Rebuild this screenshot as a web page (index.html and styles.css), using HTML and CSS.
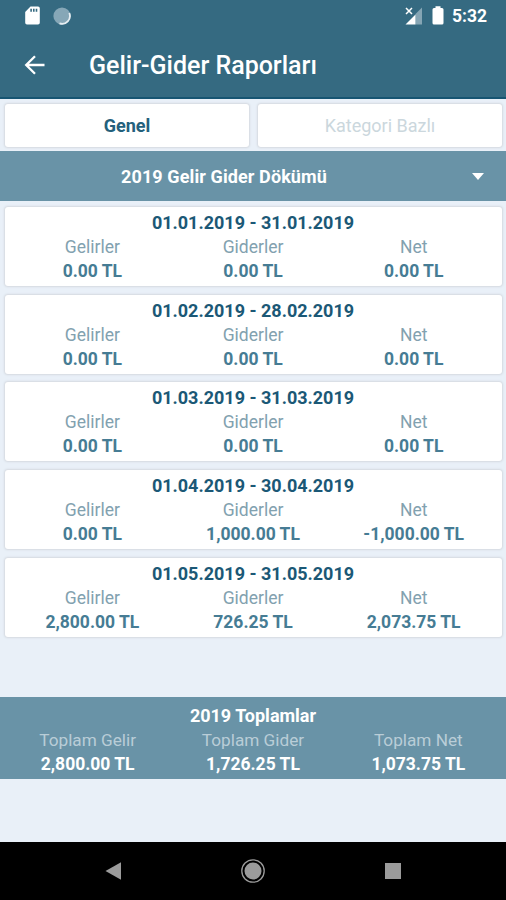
FILE: index.html
```html
<!DOCTYPE html>
<html lang="tr">

<head>
    <meta charset="UTF-8">
    <meta name="viewport" content="width=device-width, initial-scale=1.0">
    <title>Gelir-Gider Raporları</title>
    <link rel="stylesheet" href="styles.css">
</head>

<body>

    <div class="container">
        <header class="header">
            <div class="status">
                <svg class="status-sd" width="15" height="19" viewBox="0 0 15 19">
                    <path fill="#fff" fill-rule="evenodd" d="M5.5 0.5H13a1.8 1.8 0 0 1 1.8 1.8v14.4a1.8 1.8 0 0 1-1.8 1.8H2a1.8 1.8 0 0 1-1.8-1.8V6zM5.3 2.8v3h1.6v-3zM8 2.8v3h1.6v-3zM10.7 2.8v3h1.6v-3z"/>
                </svg>
                <svg class="status-sync" width="18" height="18" viewBox="0 0 18 18">
                    <circle cx="9" cy="9" r="8.6" fill="#86a7b7"/>
                    <path d="M16.3 6a7.8 7.8 0 0 1-9.8 10.3" fill="none" stroke="#e6eef2" stroke-width="1.8"/>
                </svg>
                <div class="status-right">
                    <svg width="18" height="18" viewBox="0 0 18 18">
                        <path fill="#85a5b4" d="M17 0.5V17.5H10.5V7z"/>
                        <path fill="#fff" d="M10.5 7.5V17.5H0.5z"/>
                        <path d="M1 1l6 6M7 1L1 7" stroke="#fff" stroke-width="1.5"/>
                    </svg>
                    <svg class="status-battery" width="12" height="19" viewBox="0 0 12 19">
                        <path fill="#fff" d="M3.5 0.3h5v1.7H10a1.5 1.5 0 0 1 1.5 1.5v13.5a1.5 1.5 0 0 1-1.5 1.5H2a1.5 1.5 0 0 1-1.5-1.5V3.5A1.5 1.5 0 0 1 2 2h1.5z"/>
                    </svg>
                    <span class="time">5:32</span>
                </div>
            </div>
            <div class="title-bar">
                <svg class="back" width="22" height="20" viewBox="0 0 22 20">
                    <path d="M20.5 10H2.5M11 1.2L2.2 10l8.8 8.8" fill="none" stroke="#fff" stroke-width="2.3"/>
                </svg>
                <h1>Gelir-Gider Raporları</h1>
            </div>
        </header>

        <div class="tabs">
            <div class="tab active">Genel</div>
            <div class="tab">Kategori Bazlı</div>
        </div>

        <div class="select">
            <span>2019 Gelir Gider Dökümü</span>
            <div class="arrow"></div>
        </div>

        <div class="list">
            <div class="item">
                <h2>01.01.2019 - 31.01.2019</h2>
                <div class="row">
                    <div class="col"><p>Gelirler</p><b>0.00 TL</b></div>
                    <div class="col"><p>Giderler</p><b>0.00 TL</b></div>
                    <div class="col"><p>Net</p><b>0.00 TL</b></div>
                </div>
            </div>
            <div class="item">
                <h2>01.02.2019 - 28.02.2019</h2>
                <div class="row">
                    <div class="col"><p>Gelirler</p><b>0.00 TL</b></div>
                    <div class="col"><p>Giderler</p><b>0.00 TL</b></div>
                    <div class="col"><p>Net</p><b>0.00 TL</b></div>
                </div>
            </div>
            <div class="item">
                <h2>01.03.2019 - 31.03.2019</h2>
                <div class="row">
                    <div class="col"><p>Gelirler</p><b>0.00 TL</b></div>
                    <div class="col"><p>Giderler</p><b>0.00 TL</b></div>
                    <div class="col"><p>Net</p><b>0.00 TL</b></div>
                </div>
            </div>
            <div class="item">
                <h2>01.04.2019 - 30.04.2019</h2>
                <div class="row">
                    <div class="col"><p>Gelirler</p><b>0.00 TL</b></div>
                    <div class="col"><p>Giderler</p><b>1,000.00 TL</b></div>
                    <div class="col"><p>Net</p><b>-1,000.00 TL</b></div>
                </div>
            </div>
            <div class="item">
                <h2>01.05.2019 - 31.05.2019</h2>
                <div class="row">
                    <div class="col"><p>Gelirler</p><b>2,800.00 TL</b></div>
                    <div class="col"><p>Giderler</p><b>726.25 TL</b></div>
                    <div class="col"><p>Net</p><b>2,073.75 TL</b></div>
                </div>
            </div>
        </div>

        <div class="total">
            <h2>2019 Toplamlar</h2>
            <div class="row">
                <div class="col"><p>Toplam Gelir</p><b>2,800.00 TL</b></div>
                <div class="col"><p>Toplam Gider</p><b>1,726.25 TL</b></div>
                <div class="col"><p>Toplam Net</p><b>1,073.75 TL</b></div>
            </div>
        </div>

        <div class="nav">
            <svg width="24" height="24" viewBox="0 0 24 24"><path fill="#9b9b9b" d="M4.5 12L20 3.3v17.4z"/></svg>
            <svg width="24" height="24" viewBox="0 0 24 24">
                <circle cx="12" cy="12" r="11.2" fill="none" stroke="#9b9b9b" stroke-width="1.3"/>
                <circle cx="12" cy="12" r="8.5" fill="#9b9b9b"/>
            </svg>
            <svg width="24" height="24" viewBox="0 0 24 24"><path fill="#9b9b9b" d="M4 4h16v16H4z"/></svg>
        </div>
    </div>

</body>

</html>
```

FILE: styles.css
```css
* {
    margin: 0;
    padding: 0;
    box-sizing: border-box;
}

body {
    font-family: Roboto, "Liberation Sans", sans-serif;
    font-size: 17.5px;
    background-color: #e9f0f8;
}

.container {
    width: 506px;
    height: 900px;
    display: flex;
    flex-direction: column;
    overflow: hidden;
}

.header {
    height: 99px;
    background-color: #356a81;
    border-bottom: 2px solid #175572;
    color: #fff;
}

.status {
    display: flex;
    align-items: center;
    height: 31px;
    padding: 0 19px 0 25px;
}

.status-sync {
    margin-left: 13px;
}

.status-right {
    display: flex;
    align-items: center;
    margin-left: auto;
}

.status-battery {
    margin-left: 9px;
}

.time {
    margin-left: 8px;
    font-size: 17.5px;
    font-weight: bold;
    line-height: 32px;
}

.title-bar {
    display: flex;
    align-items: center;
    height: 68px;
    padding-left: 24px;
}

.title-bar h1 {
    margin-left: 43px;
    font-size: 25px;
    font-weight: 500;
}

.tabs {
    display: flex;
    gap: 9px;
    height: 52px;
    padding: 5px 4px 4px 5px;
}

.tab {
    flex: 1;
    background-color: #fff;
    border-radius: 3px;
    box-shadow: 0 0 2px 1px #d5d9e0;
    font-size: 18px;
    line-height: 44px;
    text-align: center;
    color: #cbd7dd;
}

.tab.active {
    color: #24607c;
    font-weight: bold;
}

.select {
    position: relative;
    height: 50px;
    background-color: #6993a7;
    color: #fff;
    font-size: 18px;
    font-weight: bold;
    letter-spacing: 0.1px;
    line-height: 52px;
    text-align: center;
    padding-right: 58px;
}

.arrow {
    position: absolute;
    top: 22px;
    right: 22px;
    border: 6.5px solid transparent;
    border-top: 7px solid #fff;
    border-bottom: 0;
}

.list {
    display: flex;
    flex-direction: column;
    gap: 8.7px;
    height: 496px;
    padding: 6px 4px 0 5px;
}

.item {
    height: 79px;
    padding: 4px 8px 0 7px;
    background-color: #fff;
    border-radius: 3px;
    box-shadow: 0 0 2px 1px #d5d9e0;
}

h2 {
    font-size: 18px;
    line-height: 24px;
    text-align: center;
    color: #1b5876;
}

.row {
    display: flex;
}

.col {
    flex: 1;
    line-height: 24px;
    text-align: center;
    color: #82a1af;
}

.col b {
    display: block;
    color: #467c94;
}

.total {
    height: 82px;
    padding: 7px 5px 0;
    background-color: #6993a7;
}

.total h2,
.total .col b {
    color: #fff;
}

.total .col {
    color: #b9cdd7;
}

.total .col p {
    font-size: 17.2px;
}

.nav {
    display: flex;
    justify-content: space-between;
    align-items: center;
    height: 58px;
    margin-top: auto;
    padding: 0 101px;
    background-color: #000;
}
```
